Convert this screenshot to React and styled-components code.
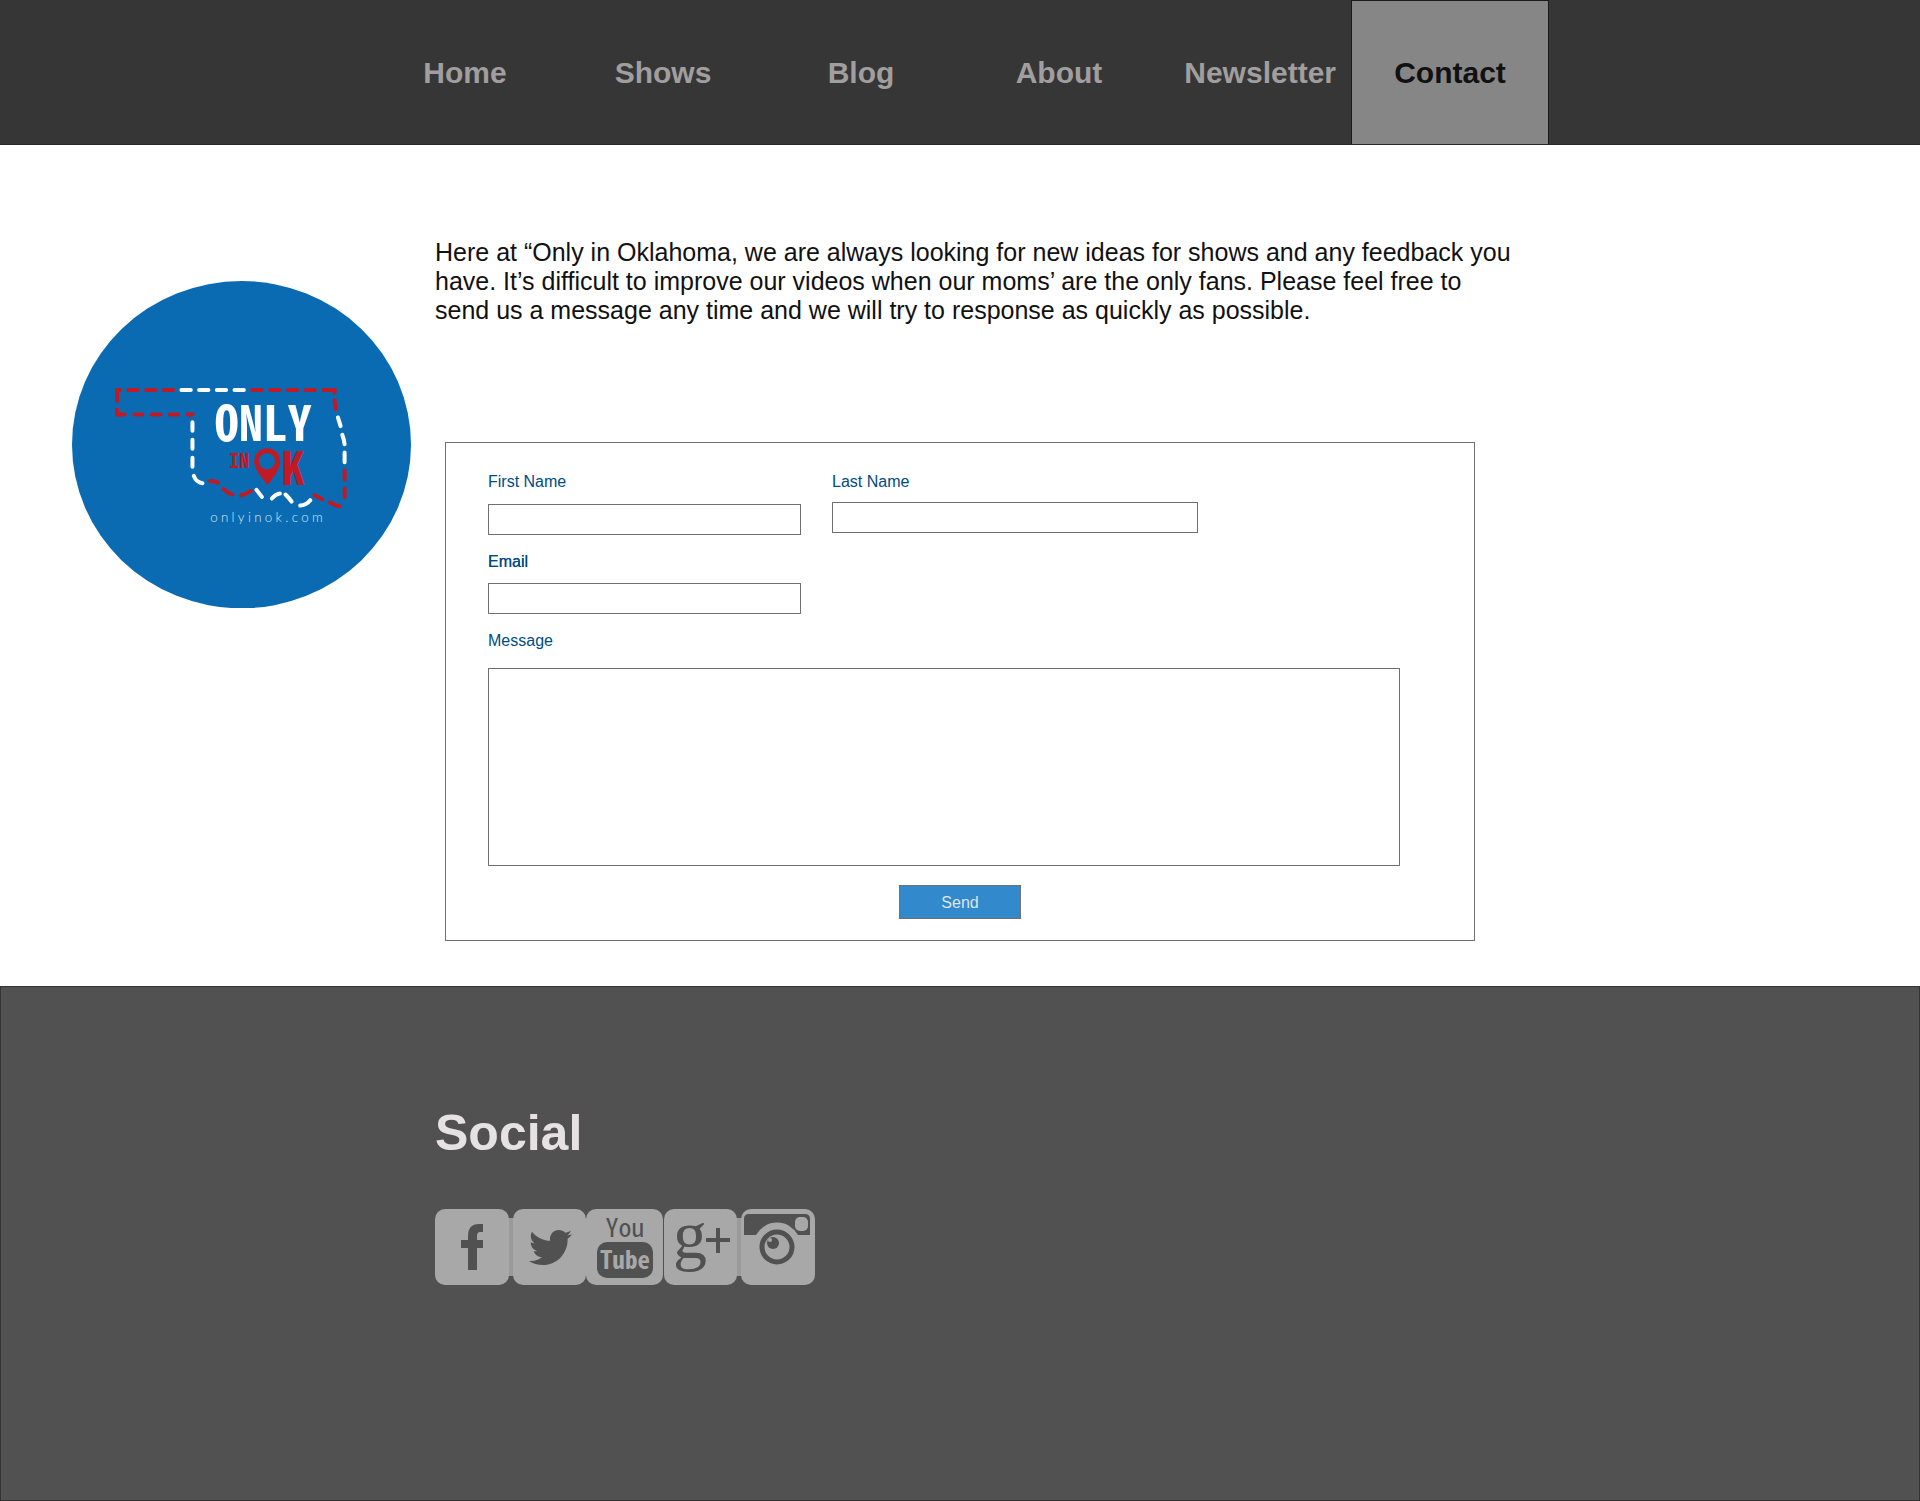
import React from "react";
import styled, { createGlobalStyle, css } from "styled-components";
import { FaTwitter } from "react-icons/fa";

const GlobalStyle = createGlobalStyle`
  *, *::before, *::after { box-sizing: border-box; }
  body {
    margin: 0;
    background: #fff;
    color: #111;
    font-family: "Liberation Sans", Arial, Helvetica, sans-serif;
  }
`;

const Page = styled.div`
  display: flex;
  flex-direction: column;
  min-height: 100vh;
`;

const Header = styled.header`
  background: #363636;
  border-bottom: 1px solid #2a2a2a;
  padding-left: 366px;
`;

const Nav = styled.nav`
  display: grid;
  grid-template-columns: repeat(4, 198px) 193px 198px;
  height: 144px;
`;

const NavLink = styled.a`
  display: flex;
  align-items: center;
  justify-content: ${(p) => (p.$wide ? "flex-end" : "center")};
  padding-right: ${(p) => (p.$wide ? "14px" : "0")};
  border: 1px solid transparent;
  border-bottom: 0;
  color: #a09e9e;
  font-size: 30px;
  font-weight: 700;
  line-height: 34px;
  text-decoration: none;
  ${(p) =>
    p.$active &&
    css`
      background: #868686;
      border-color: #1a1a1a;
      color: #111;
    `}
`;

const Main = styled.main`
  display: grid;
  grid-template-columns: 339px minmax(0, 1085px);
  column-gap: 24px;
  align-items: start;
  padding: 93px 72px 45px;
`;

const Logo = styled.svg`
  display: block;
  width: 100%;
  margin-top: 43px;
`;

const Intro = styled.p`
  margin: 0 0 117px;
  font-size: 25px;
  line-height: 29px;
`;

const Form = styled.form`
  display: flex;
  flex-direction: column;
  gap: 18px;
  max-width: 1030px;
  margin-left: 10px;
  padding: 30px 74px 21px 42px;
  border: 1px solid #707070;
`;

const NameRow = styled.div`
  display: grid;
  grid-template-columns: 313px 366px;
  column-gap: 31px;
  align-items: start;
`;

const Field = styled.div`
  display: flex;
  flex-direction: column;
  gap: ${(p) => p.$gap || 12}px;
  max-width: ${(p) => (p.$short ? "313px" : "none")};
`;

const Label = styled.label`
  color: #004b84;
  font-size: 16px;
  line-height: 18px;
  text-shadow: ${(p) => (p.$strong ? "0 0 0 #004b84" : "none")};
`;

const control = css`
  width: 100%;
  margin: 0;
  border: 1px solid #707070;
  border-radius: 0;
  background: #fff;
  font: inherit;
  font-size: 16px;
`;

const Input = styled.input`
  ${control}
  height: 31px;
  padding: 0 8px;
`;

const TextArea = styled.textarea`
  ${control}
  display: block;
  height: 198px;
  padding: 8px;
  resize: none;
`;

const SendButton = styled.button`
  align-self: center;
  width: 122px;
  height: 34px;
  margin: 1px 0 0 32px;
  padding: 2px 0 0;
  border: 1px solid #707070;
  background: #3289cb;
  color: #dfe6ec;
  font: inherit;
  font-size: 16px;
  line-height: 18px;
`;

const Footer = styled.footer`
  flex: 1;
  padding: 117px 72px 215px 434px;
  border: 1px solid #333;
  background: #515151;
`;

const FooterTitle = styled.h2`
  margin: 0 0 47px;
  color: #e6e2e3;
  font-size: 50px;
  line-height: 58px;
`;

const SocialList = styled.ul`
  display: flex;
  margin: 0;
  padding: 0;
  list-style: none;
`;

const SocialLink = styled.a`
  display: block;
  color: #515151;
`;

const SocialIcon = styled.svg`
  display: block;
  width: 76px;
  height: 76px;
  overflow: visible;
`;

const RED = "#c21a24";
const NARROW = '"Noto Sans Mono CJK SC", "Noto Sans CJK SC", sans-serif';

function SiteLogo() {
  return (
    <Logo viewBox="36 31 1016 981" role="img" aria-label="Only in OK, onlyinok.com">
      <ellipse cx="544" cy="521.5" rx="508" ry="490.5" fill="#0a6bb3" />
      <g fill="none" stroke={RED} strokeWidth="12" strokeLinecap="round">
        <path strokeLinecap="square" d="M178 358H171V389M171 417V431H178M390 431H397" />
        <path d="M178 431H194M205 358H233M258 358H286M311 358H339M576 358H604M630 358H657M683 358H711M736 358H764M790 358H823V366" />
        <path d="M823 388C823 399 825 407 827 415M853 598V627M853 653V680" />
        <path d="M223 431H247M275 431H301M329 431H354M382 431H392" />
        <path d="M838 706Q823 704 809 695M786 685L763 673M572 660Q558 670 543 673M517 671Q502 666 490 655M473 636Q462 628 450 631" />
      </g>
      <g fill="none" stroke="#fff" strokeWidth="12" strokeLinecap="round">
        <path d="M364 358H392M417 358H445M470 358H498M523 358H551" />
        <path d="M833 440L841 466M846 492Q851 505 853 520M853 545V574" />
        <path d="M397 454V480M397 507V534M397 561V588M401 615Q408 634 427 637" />
        <path d="M750 688Q738 703 720 704M694 692Q686 681 676 671M659 668Q646 670 635 683M605 678L589 657" />
      </g>
      <g fontFamily={NARROW} fontWeight="700" textAnchor="middle">
        <text x="609" y="512" fontSize="146" fill="#fff">ONLY</text>
        <text x="537" y="590" fontSize="60" fill={RED}>IN</text>
        <text x="699" y="641" fontSize="138" fill={RED}>K</text>
      </g>
      <path
        fill={RED}
        fillRule="evenodd"
        d="M621 532C643 532 660 549 660 571C660 596 640 618 622 643C604 618 582 596 582 571C582 549 599 532 621 532ZM620 547A24 24 0 1 0 620 596A24 24 0 1 0 620 547Z"
      />
      <text x="450" y="753" fontSize="40" fontFamily="Lato, sans-serif" fontWeight="300" letterSpacing="10" fill="#d5e6f4">
        onlyinok.com
      </text>
    </Logo>
  );
}

function Tile({ x = 0, width = 76, seam }) {
  return (
    <>
      {seam && <rect x={x + width - 2} y="9" width="7" height="58" fill="#9a9a9a" />}
      <rect x={x} width={width} height="76" rx="10" fill="#a8a8a8" />
    </>
  );
}

const socials = [
  {
    name: "Facebook",
    art: (
      <>
        <Tile width={74} seam />
        <path fill="#515151" d="M33 61V39H26V31H33V27Q33 15 44 15H48V23H45Q42 23 42 27V31H48V39H42V61Z" />
      </>
    ),
  },
  {
    name: "Twitter",
    art: (
      <>
        <Tile x={2} width={73} />
        <FaTwitter x="18" y="17" size="43" />
      </>
    ),
  },
  {
    name: "YouTube",
    art: (
      <>
        <Tile x={-1} width={77} />
        <rect x="10" y="33" width="56" height="36" rx="10" fill="#515151" />
        <g fontFamily={NARROW} textAnchor="middle">
          <text x="38" y="28" fontSize="26" fontWeight="500" fill="#515151">You</text>
          <text x="38" y="60" fontSize="25" fontWeight="700" fill="#a8a8a8">Tube</text>
        </g>
      </>
    ),
  },
  {
    name: "Google Plus",
    art: (
      <>
        <Tile x={1} width={73} seam />
        <text x="10" y="49" fontSize="68" fontFamily='"Liberation Serif", serif' fill="#515151">g</text>
        <path d="M43 31H67M55 19V44" stroke="#515151" strokeWidth="4" />
      </>
    ),
  },
  {
    name: "Instagram",
    art: (
      <>
        <Tile x={2} width={74} />
        <path fill="#515151" d="M10 5H66Q71 5 71 10V26H59A24 24 0 0 0 17 26H5V10Q5 5 10 5Z" />
        <rect x="56" y="8" width="13" height="14" rx="5" fill="#a8a8a8" />
        <circle cx="38" cy="38" r="15" fill="none" stroke="#515151" strokeWidth="5" />
        <circle cx="34" cy="34" r="6" fill="#515151" />
        <circle cx="31" cy="31" r="2" fill="#a8a8a8" />
      </>
    ),
  },
];

const links = ["Home", "Shows", "Blog", "About", "Newsletter", "Contact"];

export default function App() {
  return (
    <Page>
      <GlobalStyle />
      <Header>
        <Nav>
          {links.map((name) => (
            <NavLink
              key={name}
              href="#"
              $wide={name === "Newsletter"}
              $active={name === "Contact"}
              aria-current={name === "Contact" ? "page" : undefined}
            >
              {name}
            </NavLink>
          ))}
        </Nav>
      </Header>
      <Main>
        <SiteLogo />
        <div>
          <Intro>
            Here at “Only in Oklahoma, we are always looking for new ideas for shows and any feedback you
            have. It’s difficult to improve our videos when our moms’ are the only fans. Please feel free to
            send us a message any time and we will try to response as quickly as possible.
          </Intro>
          <Form onSubmit={(e) => e.preventDefault()}>
            <NameRow>
              <Field $gap={13}>
                <Label htmlFor="first">First Name</Label>
                <Input id="first" type="text" />
              </Field>
              <Field $gap={11}>
                <Label htmlFor="last">Last Name</Label>
                <Input id="last" type="text" />
              </Field>
            </NameRow>
            <Field $short>
              <Label htmlFor="email" $strong>Email</Label>
              <Input id="email" type="email" />
            </Field>
            <Field $gap={18}>
              <Label htmlFor="message">Message</Label>
              <TextArea id="message" />
            </Field>
            <SendButton type="submit">Send</SendButton>
          </Form>
        </div>
      </Main>
      <Footer>
        <FooterTitle>Social</FooterTitle>
        <SocialList>
          {socials.map((s) => (
            <li key={s.name}>
              <SocialLink href="#" aria-label={s.name}>
                <SocialIcon viewBox="0 0 76 76" aria-hidden="true">
                  {s.art}
                </SocialIcon>
              </SocialLink>
            </li>
          ))}
        </SocialList>
      </Footer>
    </Page>
  );
}
